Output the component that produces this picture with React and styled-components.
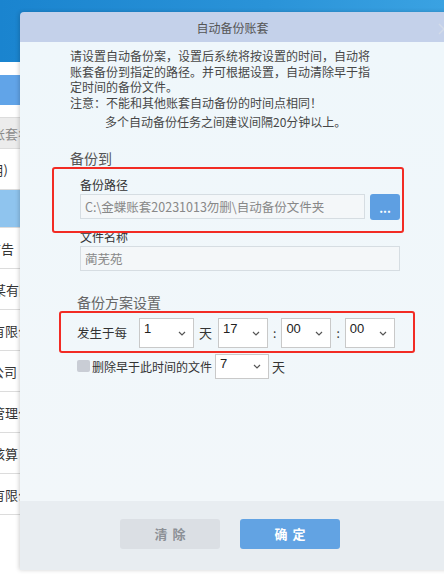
import React from 'react';
import styled, { createGlobalStyle } from 'styled-components';

const GlobalStyle = createGlobalStyle`
  html, body {
    margin: 0;
    padding: 0;
    width: 444px;
    height: 574px;
    overflow: hidden;
    background: #fff;
    font-family: "Liberation Sans", "Noto Sans CJK SC", sans-serif;
  }
`;

const Page = styled.div`
  position: relative;
  width: 444px;
  height: 574px;
  overflow: hidden;
  background: #fff;
`;

const TopBar = styled.div`
  height: 62px;
  background: linear-gradient(90deg, #1a84cf 0%, #2a93d8 60%, #3aa2e2 100%);
`;

const Sidebar = styled.div`
  width: 34px;
  display: flex;
  flex-direction: column;
  padding-top: 13px;
`;

const SideTab = styled.div`
  height: 30px;
  background: #61a4e8;
  margin-bottom: 12px;
`;

const SideRow = styled.div`
  height: ${(p) => p.h || 41}px;
  display: flex;
  align-items: center;
  justify-content: flex-end;
  overflow: hidden;
  white-space: nowrap;
  font-size: 13px;
  padding-right: ${(p) => p.pr || 0}px;
  color: ${(p) => (p.head ? '#8a8a8a' : '#333')};
  background: ${(p) => (p.head ? '#ececec' : p.active ? '#8fc4ee' : '#fff')};
  border-top: 1px solid #dcdcdc;
  box-sizing: border-box;
  font-family: "Noto Sans CJK SC", sans-serif;
`;

const Dialog = styled.div`
  position: absolute;
  left: 20px;
  top: 12px;
  width: 440px;
  height: 558px;
  display: flex;
  flex-direction: column;
  border-radius: 4px 4px 0 0;
  overflow: hidden;
  box-shadow: -1px 0 4px rgba(0, 0, 0, 0.18);
  font-family: "Noto Sans CJK SC", sans-serif;
`;

const Header = styled.div`
  height: 30px;
  flex: none;
  background: #c4d1ea;
  display: flex;
  align-items: center;
  justify-content: center;
  position: relative;
  font-size: 12px;
  color: #555;
  padding-right: 15px;
`;

const Close = styled.div`
  position: absolute;
  right: 10px;
  top: 9px;
  width: 12px;
  height: 12px;
`;

const Body = styled.div`
  flex: 1;
  background: linear-gradient(180deg, #eff7fb 0%, #f2f7fa 100%);
  padding: 6px 0 0 50px;
  display: flex;
  flex-direction: column;
`;

const Notice = styled.div`
  font-size: 12px;
  line-height: 15.5px;
  color: #474747;
`;

const NoticeExtra = styled.div`
  font-size: 12px;
  line-height: 15.5px;
  color: #474747;
  margin: 4px 0 0 35px;
`;

const SectionTitle = styled.div`
  font-size: 14px;
  color: ${(p) => p.color || '#555'};
  margin: ${(p) => p.m};
  line-height: 18px;
`;

const Group = styled.div`
  display: flex;
  flex-direction: column;
  padding-left: ${(p) => p.pl}px;
`;

const Label = styled.div`
  font-size: 12px;
  color: #333;
  line-height: 16px;
  margin-top: ${(p) => p.mt || 0}px;
`;

const InputRow = styled.div`
  display: flex;
  align-items: center;
  gap: 5px;
  margin-top: 1px;
`;

const TextInput = styled.div`
  width: ${(p) => p.w}px;
  height: 25px;
  box-sizing: border-box;
  border: 1px solid #d6dde2;
  background: #f4f7f9;
  color: #888;
  font-size: 12.5px;
  display: flex;
  align-items: center;
  padding-left: 4px;
  white-space: nowrap;
`;

const DotsButton = styled.div`
  width: 30px;
  height: 26px;
  border-radius: 3px;
  background: #5e9fe2;
  color: #fff;
  font-weight: bold;
  font-size: 12px;
  display: flex;
  align-items: center;
  justify-content: center;
  line-height: 1;
  padding-top: 2px;
  box-sizing: border-box;
`;

const Row = styled.div`
  display: flex;
  align-items: center;
  font-size: 12px;
  color: #333;
  margin-top: ${(p) => p.mt || 0}px;
`;

const SelectBox = styled.div`
  position: relative;
  width: ${(p) => p.w}px;
  height: ${(p) => p.h}px;
  box-sizing: border-box;
  border: 1px solid #c9c9c9;
  background: #fff;
  font-size: 13px;
  color: #222;
  padding: ${(p) => (p.h > 27 ? 2 : 1)}px 0 0 4px;
  margin-left: ${(p) => p.ml || 0}px;
  font-family: "Liberation Sans", sans-serif;
`;

const Chevron = styled.svg`
  position: absolute;
  right: 7px;
  top: 50%;
  margin-top: -2px;
`;

const Unit = styled.span`
  margin-left: ${(p) => p.ml || 0}px;
  font-size: ${(p) => p.fs || 12}px;
`;

const Checkbox = styled.div`
  width: 13px;
  height: 12px;
  border-radius: 2px;
  background: #c9cdd5;
  margin-right: 2px;
`;

const Footer = styled.div`
  height: 69px;
  flex: none;
  background: #e8edf1;
  display: flex;
  align-items: center;
  gap: 20px;
  padding: 0 0 4px 100px;
  box-sizing: border-box;
`;

const FooterButton = styled.div`
  width: 100px;
  height: 30px;
  border-radius: 3px;
  display: flex;
  align-items: center;
  justify-content: center;
  font-size: 13px;
  font-weight: bold;
  letter-spacing: 5px;
  text-indent: 5px;
  background: ${(p) => (p.primary ? '#62a3e3' : '#dbdfe4')};
  color: ${(p) => (p.primary ? '#fff' : '#8c9096')};
`;

const RedMark = styled.div`
  position: absolute;
  left: ${(p) => p.x}px;
  top: ${(p) => p.y}px;
  width: ${(p) => p.w}px;
  height: ${(p) => p.h}px;
  box-sizing: border-box;
  border: 2.5px solid #f22b24;
  border-radius: 3px;
  pointer-events: none;
`;

const Select = ({ value, w, h, ml }) => (
  <SelectBox w={w} h={h} ml={ml}>
    {value}
    <Chevron width="8" height="5" viewBox="0 0 8 5">
      <path d="M1 1 L4 4 L7 1" fill="none" stroke="#555" strokeWidth="1.2" />
    </Chevron>
  </SelectBox>
);

// only the right ends of the list texts peek out from under the dialog
const sideRows = [
  { t: '演示账套名', head: true, h: 31, pr: 3 },
  { t: '(已启用)', pr: 26 },
  { t: '', active: true, h: 38 },
  { t: '演示账套广告', pr: 20 },
  { t: '演示公司某有限', pr: 2 },
  { t: '演示有限公', pr: 3 },
  { t: '演示公司', pr: 17 },
  { t: '演示管理公', pr: 3 },
  { t: '演示核算', pr: 16 },
  { t: '演示有限公', pr: 3 },
  { t: '', h: 58 },
];

const App = () => (
  <Page>
    <GlobalStyle />
    <TopBar />
    <Sidebar>
      <SideTab />
      {sideRows.map((r, i) => (
        <SideRow key={i} head={r.head} active={r.active} h={r.h} pr={r.pr}>
          {r.t}
        </SideRow>
      ))}
    </Sidebar>
    <Dialog>
      <Header>
        自动备份账套
        <Close>
          <svg width="12" height="12" viewBox="0 0 12 12">
            <path d="M1 1 L11 11 M11 1 L1 11" stroke="#d3dbe9" strokeWidth="1.4" />
          </svg>
        </Close>
      </Header>
      <Body>
        <Notice>
          请设置自动备份案，设置后系统将按设置的时间，自动将<br />
          账套备份到指定的路径。并可根据设置，自动清除早于指<br />
          定时间的备份文件。<br />
          注意：不能和其他账套自动备份的时间点相同！
        </Notice>
        <NoticeExtra>多个自动备份任务之间建议间隔20分钟以上。</NoticeExtra>
        <SectionTitle m="19px 0 0 0">备份到</SectionTitle>
        <Group pl={10}>
          <Label mt={10}>备份路径</Label>
          <InputRow>
            <TextInput w={285}>C:\金蝶账套20231013勿删\自动备份文件夹</TextInput>
            <DotsButton>...</DotsButton>
          </InputRow>
          <Label mt={9}>文件名称</Label>
          <InputRow>
            <TextInput w={320}>蔺芜苑</TextInput>
          </InputRow>
        </Group>
        <Group pl={7}>
          <SectionTitle m="22px 0 0 0" color="#666">备份方案设置</SectionTitle>
          <Row mt={7}>
            <Unit fs={12.5}>发生于每</Unit>
            <Select value="1" w={55} h={30} ml={12} />
            <Unit ml={5} fs={13}>天</Unit>
            <Select value="17" w={50} h={30} ml={6} />
            <Unit ml={5}>:</Unit>
            <Select value="00" w={50} h={30} ml={5} />
            <Unit ml={5}>:</Unit>
            <Select value="00" w={50} h={30} ml={5} />
          </Row>
          <Row mt={6}>
            <Checkbox />
            <span>删除早于此时间的文件</span>
            <Select value="7" w={54} h={25} ml={3} />
            <Unit ml={3} fs={13}>天</Unit>
          </Row>
        </Group>
      </Body>
      <Footer>
        <FooterButton>清除</FooterButton>
        <FooterButton primary>确定</FooterButton>
      </Footer>
      <RedMark x={32} y={155} w={352} h={66} />
      <RedMark x={39} y={299} w={356} h={42} />
    </Dialog>
  </Page>
);

export default App;
